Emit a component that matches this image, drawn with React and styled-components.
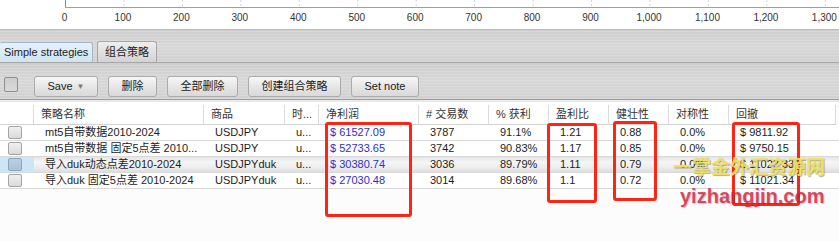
import React from 'react'
import styled, { createGlobalStyle } from 'styled-components'

const GlobalStyle = createGlobalStyle`
    body {
        margin: 0;
        background: #fcfcfc;
        font-family: 'Liberation Sans', 'Noto Sans CJK SC', sans-serif;
        font-size: 11px;
        color: #1c1c1c;
    }
`

const COLUMNS = '34px 170px 81px 34px 100px 70px 60px 60px 60px 60px 107px'

const headers = ['', '策略名称', '商品', '时...', '净利润', '# 交易数', '% 获利', '盈利比', '健壮性', '对称性', '回撤']

const rows = [
    ['mt5自带数据2010-2024', 'USDJPY', 'u...', '$ 61527.09', '3787', '91.1%', '1.21', '0.88', '0.0%', '$ 9811.92'],
    ['mt5自带数据 固定5点差 2010...', 'USDJPY', 'u...', '$ 52733.65', '3742', '90.83%', '1.17', '0.85', '0.0%', '$ 9750.15'],
    ['导入duk动态点差2010-2024', 'USDJPYduk', 'u...', '$ 30380.74', '3036', '89.79%', '1.11', '0.79', '0.0%', '$ 11022.33'],
    ['导入duk 固定5点差 2010-2024', 'USDJPYduk', 'u...', '$ 27030.48', '3014', '89.68%', '1.1', '0.72', '0.0%', '$ 11021.34'],
]

const ticks = ['0', '100', '200', '300', '400', '500', '600', '700', '800', '900', '1,000', '1,100', '1,200', '1,300']

// hand-drawn highlight boxes over the screenshot
const marks = [
    { left: 325, top: 122, width: 87, height: 95 },
    { left: 547, top: 123, width: 50, height: 80 },
    { left: 613, top: 121, width: 44, height: 80 },
    { left: 732, top: 122, width: 68, height: 84 },
]

const Axis = () => (
    <ChartSvg width="839" height="29">
        {ticks.map((t, i) => {
            const x = 65.5 + i * 58.45
            return (
                <g key={t}>
                    {i > 0 && <line x1={x} y1="0" x2={x} y2="7" stroke="#d6d6d6" strokeDasharray="2 2" />}
                    <text x={x - 1} y="21" textAnchor="middle">{t}</text>
                </g>
            )
        })}
        <line x1="65.5" y1="0" x2="65.5" y2="7.5" stroke="#8c8c8c" />
        <line x1="65" y1="7.5" x2="839" y2="7.5" stroke="#a0a0a0" />
    </ChartSvg>
)

const App = () => {
    return (
        <Page>
            <GlobalStyle />
            <Axis />
            <TabStrip>
                <Tab $active $width={93} $align="left">Simple strategies</Tab>
                <Tab $width={60}>组合策略</Tab>
            </TabStrip>
            <Toolbar>
                <ToolCheck />
                <ButtonGroup>
                    <Button $width={64}>Save <Arrow>▼</Arrow></Button>
                    <Button $width={49}>删除</Button>
                    <Button $width={71}>全部删除</Button>
                    <Button $width={93}>创建组合策略</Button>
                    <Button $width={68}>Set note</Button>
                </ButtonGroup>
            </Toolbar>
            <Table>
                <HeaderRow>
                    {headers.map((h, i) => (
                        <HeaderCell key={i}>{h}</HeaderCell>
                    ))}
                </HeaderRow>
                {rows.map((r, i) => (
                    <Row key={i} $selected={i === 2}>
                        <CheckCell $selected={i === 2}>
                            <RowCheck $selected={i === 2} />
                        </CheckCell>
                        {r.map((c, j) => (
                            <Cell key={j} $blue={j === 3}>{c}</Cell>
                        ))}
                    </Row>
                ))}
            </Table>
            {marks.map((m, i) => (
                <Mark key={i} style={{ left: m.left, top: m.top, width: m.width, height: m.height }} />
            ))}
            <WaterCn>一掌金外汇资源网</WaterCn>
            <WaterUrl>yizhangjin.com</WaterUrl>
        </Page>
    )
}

export default App

const Page = styled.div`
    position: relative;
    width: 839px;
    height: 241px;
    overflow: hidden;
    background: #fcfcfc;
`

const ChartSvg = styled.svg`
    display: block;
    background: #ffffff;
    font-family: 'Liberation Sans', sans-serif;
    font-size: 10px;
    fill: #333333;
`

const metal = `
    background:
        repeating-linear-gradient(0deg, rgba(255, 255, 255, 0.10) 0 1px, rgba(0, 0, 0, 0.015) 1px 3px),
        linear-gradient(#d1d1d1, #dadada 50%, #d4d4d4);
`

const TabStrip = styled.div`
    display: flex;
    align-items: flex-end;
    gap: 4px;
    height: 32px;
    border-top: 1px solid #bdbdbd;
    border-bottom: 1px solid #a6a6a6;
    ${metal}
`

const Tab = styled.div`
    box-sizing: border-box;
    width: ${p => p.$width}px;
    height: ${p => (p.$active ? 20 : 21)}px;
    padding-left: ${p => (p.$align === 'left' ? 3 : 0)}px;
    text-align: ${p => p.$align || 'center'};
    line-height: ${p => (p.$active ? 19 : 20)}px;
    font-size: 11px;
    color: #222;
    border: 1px solid ${p => (p.$active ? '#a2b9c9' : '#a6a6a6')};
    border-bottom: none;
    border-left-color: ${p => (p.$active ? 'transparent' : '#a6a6a6')};
    border-radius: 3px 3px 0 0;
    background: ${p => (p.$active
        ? 'linear-gradient(#e6f2fa, #cfe4f2)'
        : 'linear-gradient(#eeeeee, #d3d3d3)')};
    white-space: nowrap;
`

const Toolbar = styled.div`
    display: flex;
    align-items: center;
    box-sizing: border-box;
    height: 37px;
    padding: 10px 4px 0;
    border-bottom: 1px solid #9e9e9e;
    ${metal}
`

const ToolCheck = styled.div`
    box-sizing: border-box;
    width: 14px;
    height: 15px;
    margin-right: 16px;
    margin-top: -3px;
    border: 1px solid #8f8f8f;
    border-radius: 2px;
    background: linear-gradient(#cdcdcd, #dadada);
`

const ButtonGroup = styled.div`
    display: flex;
    gap: 10px;
`

const Button = styled.div`
    box-sizing: border-box;
    width: ${p => p.$width}px;
    height: 21px;
    line-height: 19px;
    text-align: center;
    font-size: 11px;
    color: #222;
    border: 1px solid #ababab;
    border-radius: 3px;
    background: linear-gradient(#f7f7f7, #e6e6e6 50%, #d9d9d9);
    white-space: nowrap;
`

const Arrow = styled.span`
    font-size: 8px;
    color: #7a7a7a;
    vertical-align: 1px;
    margin-left: 1px;
`

const Table = styled.div`
    border-top: 2px solid #e9e9e9;
    background: #fcfcfc;
`

const HeaderRow = styled.div`
    display: grid;
    grid-template-columns: ${COLUMNS};
    width: 836px;
    padding-top: 3px;
    border-bottom: 1px solid #d2d2d2;
    background: #ffffff;
`

const HeaderCell = styled.div`
    box-sizing: border-box;
    height: 19px;
    line-height: 19px;
    padding-left: 7px;
    border-right: 1px solid #dcdcdc;
    color: #333;
    white-space: nowrap;
    overflow: hidden;
`

const Row = styled.div`
    display: grid;
    grid-template-columns: ${COLUMNS};
    align-items: center;
    height: 15px;
    border-bottom: 1px solid #d9d9d9;
    background: ${p => (p.$selected
        ? 'linear-gradient(#e4e4e4, #f6f6f6 35%, #ececec 70%, #dedede)'
        : '#ffffff')};
`

const CheckCell = styled.div`
    height: 15px;
    display: flex;
    align-items: center;
    background: ${p => (p.$selected ? '#cde6f6' : 'transparent')};
`

const RowCheck = styled.div`
    box-sizing: border-box;
    width: 14px;
    height: 13px;
    margin-left: 8px;
    border: 1px solid ${p => (p.$selected ? '#8fa6b8' : '#a3a3a3')};
    border-radius: 2px;
    background: ${p => (p.$selected
        ? 'linear-gradient(#b8cfe1, #a9c3d8)'
        : 'linear-gradient(#f0f0f0, #dadada)')};
`

const Cell = styled.div`
    padding-left: 11px;
    line-height: 15px;
    white-space: nowrap;
    overflow: hidden;
    color: ${p => (p.$blue ? '#2b2be0' : '#1c1c1c')};
`

const Mark = styled.div`
    position: absolute;
    box-sizing: border-box;
    border: 3px solid #ff2414;
    border-radius: 3px;
`

const WaterCn = styled.div`
    position: absolute;
    left: 673px;
    top: 156px;
    font-family: 'Noto Sans CJK SC', sans-serif;
    font-weight: bold;
    font-size: 19px;
    line-height: 19px;
    color: rgba(240, 228, 100, 0.92);
    text-shadow: 1px 1px 1px rgba(90, 80, 20, 0.45);
    white-space: nowrap;
`

const WaterUrl = styled.div`
    position: absolute;
    left: 680px;
    top: 186px;
    font-family: 'Liberation Sans', sans-serif;
    font-weight: bold;
    font-size: 20px;
    line-height: 20px;
    color: rgba(214, 40, 70, 0.82);
    text-shadow: 1px 1px 1px rgba(80, 0, 20, 0.25);
    white-space: nowrap;
`
